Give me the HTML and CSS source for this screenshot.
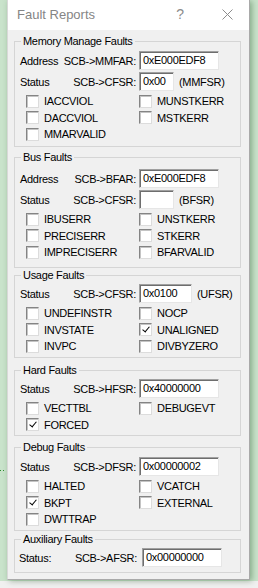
FILE: index.html
```html
<!DOCTYPE html>
<html lang="en">
<head>
    <meta charset="UTF-8">
    <title>Fault Reports</title>
    <link rel="stylesheet" href="styles.css">
</head>
<body>

    <div class="desktop">
        <svg class="dots" width="5" height="3" viewBox="0 0 5 3"><rect x="0" y="1" width="1" height="1" fill="#2c8c2c"/><rect x="3" y="1" width="1" height="1" fill="#2c8c2c"/></svg>

        <div class="window">
            <div class="titlebar">
                <span class="title">Fault Reports</span>
                <span class="help">?</span>
                <svg class="close" width="11" height="11" viewBox="0 0 11 11"><path d="M0.5 0.5 L10.5 10.5 M10.5 0.5 L0.5 10.5" stroke="#8c8c8c" stroke-width="1" fill="none"/></svg>
            </div>

            <div class="client">

                <!-- memory manage -->
                <fieldset class="group mem">
                    <legend>Memory Manage Faults</legend>
                    <div class="field">
                        <span class="caption"><span>Address</span><span>SCB-&gt;MMFAR:</span></span>
                        <span class="edit">0xE000EDF8</span>
                    </div>
                    <div class="field">
                        <span class="caption"><span>Status</span><span>SCB-&gt;CFSR:</span></span>
                        <span class="edit short">0x00</span>
                        <span class="suffix">(MMFSR)</span>
                    </div>
                    <div class="checks">
                        <label class="check"><span class="box"></span>IACCVIOL</label>
                        <label class="check"><span class="box"></span>MUNSTKERR</label>
                        <label class="check"><span class="box"></span>DACCVIOL</label>
                        <label class="check"><span class="box"></span>MSTKERR</label>
                        <label class="check"><span class="box"></span>MMARVALID</label>
                    </div>
                </fieldset>

                <!-- bus -->
                <fieldset class="group bus">
                    <legend>Bus Faults</legend>
                    <div class="field">
                        <span class="caption"><span>Address</span><span>SCB-&gt;BFAR:</span></span>
                        <span class="edit">0xE000EDF8</span>
                    </div>
                    <div class="field">
                        <span class="caption"><span>Status</span><span>SCB-&gt;CFSR:</span></span>
                        <span class="edit short"></span>
                        <span class="suffix">(BFSR)</span>
                    </div>
                    <div class="checks">
                        <label class="check"><span class="box"></span>IBUSERR</label>
                        <label class="check"><span class="box"></span>UNSTKERR</label>
                        <label class="check"><span class="box"></span>PRECISERR</label>
                        <label class="check"><span class="box"></span>STKERR</label>
                        <label class="check"><span class="box"></span>IMPRECISERR</label>
                        <label class="check"><span class="box"></span>BFARVALID</label>
                    </div>
                </fieldset>

                <!-- usage -->
                <fieldset class="group usage">
                    <legend>Usage Faults</legend>
                    <div class="field">
                        <span class="caption"><span>Status</span><span>SCB-&gt;CFSR:</span></span>
                        <span class="edit mid">0x0100</span>
                        <span class="suffix">(UFSR)</span>
                    </div>
                    <div class="checks">
                        <label class="check"><span class="box"></span>UNDEFINSTR</label>
                        <label class="check"><span class="box"></span>NOCP</label>
                        <label class="check"><span class="box"></span>INVSTATE</label>
                        <label class="check"><span class="box on"></span>UNALIGNED</label>
                        <label class="check"><span class="box"></span>INVPC</label>
                        <label class="check"><span class="box"></span>DIVBYZERO</label>
                    </div>
                </fieldset>

                <!-- hard -->
                <fieldset class="group hard">
                    <legend>Hard Faults</legend>
                    <div class="field">
                        <span class="caption"><span>Status</span><span>SCB-&gt;HFSR:</span></span>
                        <span class="edit">0x40000000</span>
                    </div>
                    <div class="checks">
                        <label class="check"><span class="box"></span>VECTTBL</label>
                        <label class="check"><span class="box"></span>DEBUGEVT</label>
                        <label class="check"><span class="box on"></span>FORCED</label>
                    </div>
                </fieldset>

                <!-- debug -->
                <fieldset class="group debug">
                    <legend>Debug Faults</legend>
                    <div class="field">
                        <span class="caption"><span>Status</span><span>SCB-&gt;DFSR:</span></span>
                        <span class="edit">0x00000002</span>
                    </div>
                    <div class="checks">
                        <label class="check"><span class="box"></span>HALTED</label>
                        <label class="check"><span class="box"></span>VCATCH</label>
                        <label class="check"><span class="box on"></span>BKPT</label>
                        <label class="check"><span class="box"></span>EXTERNAL</label>
                        <label class="check"><span class="box"></span>DWTTRAP</label>
                    </div>
                </fieldset>

                <!-- auxiliary -->
                <fieldset class="group aux">
                    <legend>Auxiliary Faults</legend>
                    <div class="field">
                        <span class="caption wide"><span>Status:</span><span>SCB-&gt;AFSR:</span></span>
                        <span class="edit">0x00000000</span>
                    </div>
                </fieldset>

            </div>
        </div>
    </div>

    <div class="taskbar"></div>

</body>
</html>
```

FILE: styles.css
```css
* {
    box-sizing: border-box;
}

body {
    margin: 0;
    width: 258px;
    height: 588px;
    overflow: hidden;
    background: #f0f0f0;
    font-family: "Liberation Sans", Arial, sans-serif;
    font-size: 11px;
    letter-spacing: -0.3px;
    color: #000;
}

.desktop {
    position: relative;
    height: 581px;
    background: #c9e3cb;
    padding-left: 7px;
}

.dots {
    position: absolute;
    left: 0;
    top: 469px;
}

.window {
    width: 243px;
    height: 580px;
    border: 1px solid #a9a9a9;
    border-top: none;
    border-left-color: #d8d8d8;
    background: #f0f0f0;
    box-shadow: 2px 1px 6px rgba(0, 60, 0, 0.35);
    display: flex;
    flex-direction: column;
}

.titlebar {
    height: 30px;
    background: #fff;
    display: flex;
    align-items: center;
    padding-left: 9px;
}

.title {
    font-size: 13px;
    letter-spacing: 0;
    color: #858585;
    flex: 1;
    padding-bottom: 1px;
}

.help {
    font-size: 14px;
    letter-spacing: 0;
    color: #8c8c8c;
    margin-right: 38px;
    padding-bottom: 2px;
}

.close {
    margin-right: 16px;
    margin-bottom: 1px;
}

.client {
    padding: 4px 8px 0 6px;
}

/* group boxes */

.group {
    margin: 0;
    padding: 1px 0 2.5px 5px;
    min-width: 0;
    width: 227px;
    border: 1px solid #d5d5d5;
}

.group legend {
    margin-left: 1px;
    padding: 0 2px;
    line-height: 14px;
    height: 14px;
}

.mem { padding-top: 2px; padding-bottom: 3.5px; }
.bus { margin-top: 3px; padding-top: 4px; padding-bottom: 6.5px; }
.usage { margin-top: 0; }
.hard { margin-top: 5px; padding-bottom: 2px; }
.debug { margin-top: 4px; padding-top: 2px; }
.aux { margin-top: 1px; padding-bottom: 4px; }

.field {
    display: flex;
    align-items: center;
    height: 21px;
}

.caption {
    width: 116px;
    display: flex;
    justify-content: space-between;
}

.caption.wide {
    width: 118px;
    margin-left: -1px;
}

.edit {
    width: 80px;
    height: 19px;
    margin-left: 3px;
    padding: 0 0 0 3px;
    background: #fff;
    border: 1px solid;
    border-color: #a0a0a0 #e6e6e6 #e6e6e6 #a0a0a0;
    box-shadow: inset 1px 1px 0 #6e6e6e;
    line-height: 17px;
    white-space: nowrap;
}

.caption.wide + .edit {
    margin-left: 5px;
}

.edit.short { width: 35px; }
.edit.mid { width: 53px; }

.suffix {
    margin-left: 5px;
}

/* checkboxes */

.checks {
    display: grid;
    grid-template-columns: 113px 1fr;
    grid-auto-rows: 16.5px;
    margin-top: 1px;
    padding-left: 6px;
}

.check {
    display: flex;
    align-items: center;
    gap: 5px;
    white-space: nowrap;
}

.box {
    width: 13px;
    height: 13px;
    flex: none;
    background: #fff;
    border: 1px solid;
    border-color: #848484 #dcdcdc #dcdcdc #848484;
    box-shadow: inset 1px 1px 0 #c4c4c4;
    position: relative;
}

.box.on::after {
    content: "";
    position: absolute;
    left: 4px;
    top: 1px;
    width: 3px;
    height: 6px;
    border: solid #000;
    border-width: 0 1.5px 1.5px 0;
    transform: rotate(40deg);
}

.taskbar {
    height: 7px;
    background: #f0f0f0;
}
```
